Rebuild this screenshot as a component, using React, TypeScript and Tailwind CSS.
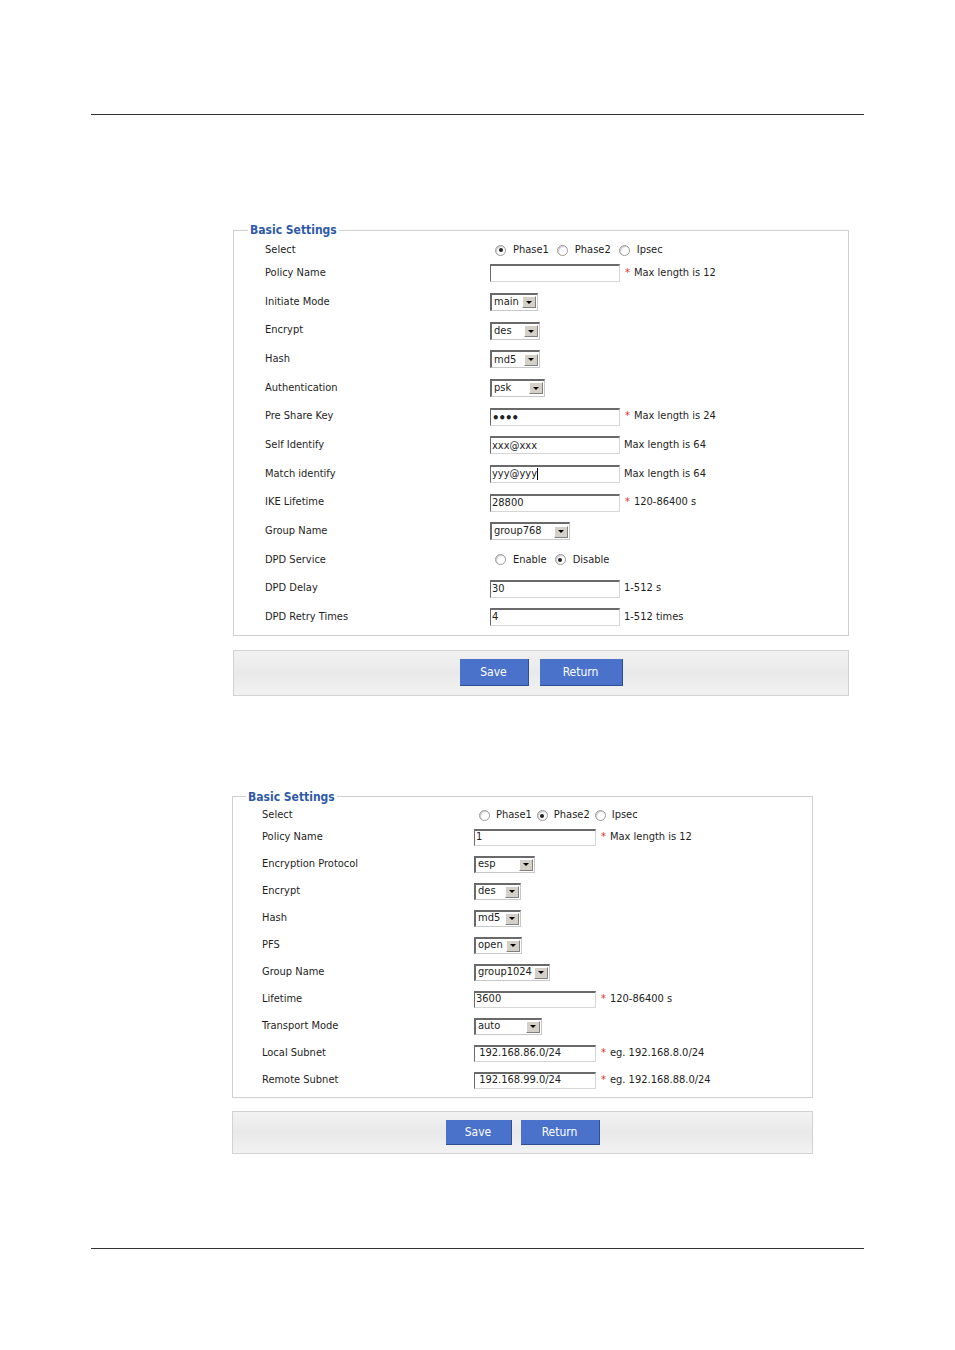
import React from "react";

type Row = {
  label: string;
  kind: "radio" | "text" | "select";
  options?: string[];
  checked?: number;
  value?: string;
  width?: number;
  star?: boolean;
  note?: string;
  dots?: boolean;
  caret?: boolean;
};

const phase1: Row[] = [
  { label: "Select", kind: "radio", options: ["Phase1", "Phase2", "Ipsec"], checked: 0 },
  { label: "Policy Name", kind: "text", value: "", star: true, note: "Max length is 12" },
  { label: "Initiate Mode", kind: "select", value: "main", width: 48 },
  { label: "Encrypt", kind: "select", value: "des", width: 50 },
  { label: "Hash", kind: "select", value: "md5", width: 50 },
  { label: "Authentication", kind: "select", value: "psk", width: 55 },
  { label: "Pre Share Key", kind: "text", value: "••••", dots: true, star: true, note: "Max length is 24" },
  { label: "Self Identify", kind: "text", value: "xxx@xxx", note: "Max length is 64" },
  { label: "Match identify", kind: "text", value: "yyy@yyy", caret: true, note: "Max length is 64" },
  { label: "IKE Lifetime", kind: "text", value: "28800", star: true, note: "120-86400 s" },
  { label: "Group Name", kind: "select", value: "group768", width: 80 },
  { label: "DPD Service", kind: "radio", options: ["Enable", "Disable"], checked: 1 },
  { label: "DPD Delay", kind: "text", value: "30", note: "1-512 s" },
  { label: "DPD Retry Times", kind: "text", value: "4", note: "1-512 times" },
];

const phase2: Row[] = [
  { label: "Select", kind: "radio", options: ["Phase1", "Phase2", "Ipsec"], checked: 1 },
  { label: "Policy Name", kind: "text", value: "1", star: true, note: "Max length is 12" },
  { label: "Encryption Protocol", kind: "select", value: "esp", width: 61 },
  { label: "Encrypt", kind: "select", value: "des", width: 47 },
  { label: "Hash", kind: "select", value: "md5", width: 47 },
  { label: "PFS", kind: "select", value: "open", width: 48 },
  { label: "Group Name", kind: "select", value: "group1024", width: 76 },
  { label: "Lifetime", kind: "text", value: "3600", star: true, note: "120-86400 s" },
  { label: "Transport Mode", kind: "select", value: "auto", width: 68 },
  { label: "Local Subnet", kind: "text", value: " 192.168.86.0/24", star: true, note: "eg. 192.168.8.0/24" },
  { label: "Remote Subnet", kind: "text", value: " 192.168.99.0/24", star: true, note: "eg. 192.168.88.0/24" },
];

const font = { fontFamily: '"DejaVu Sans Condensed", "DejaVu Sans", "Liberation Sans", sans-serif' };

const Radio = ({ on }: { on: boolean }) => (
  <span className="relative inline-block w-[11px] h-[11px] rounded-full border border-[#9a9a9a] bg-white shadow-[inset_1px_1px_1px_#c8c8c8]">
    {on && <span className="absolute left-[2.5px] top-[2.5px] w-[4px] h-[4px] rounded-full bg-[#222]" />}
  </span>
);

const TextBox = ({ row, w, h }: { row: Row; w: number; h: number }) => (
  <span
    className="flex items-center bg-white border border-t-2 border-t-[#6a6a6a] border-l-[#6a6a6a] border-r-[#d6d6d6] border-b-[#d6d6d6] pl-[1px] text-[11px] text-[#222] whitespace-pre"
    style={{ width: w, height: h }}
  >
    {row.dots ? <span className="text-[13px] font-bold tracking-[-1px] leading-none">{row.value}</span> : row.value}
    {row.caret && <span className="w-[1px] h-[12px] bg-black" />}
  </span>
);

const SelectBox = ({ row, h }: { row: Row; h: number }) => (
  <span
    className="flex items-center justify-between bg-white border border-t-2 border-l-2 border-t-[#6a6a6a] border-l-[#6a6a6a] border-r-[#c8c8c8] border-b-[#c8c8c8] pl-[2px] pr-[1px] text-[11px] text-[#222]"
    style={{ width: row.width, height: h }}
  >
    <span>{row.value}</span>
    <span className="flex items-center justify-center w-[14px] h-[12px] bg-[#d4d0c8] border border-t-white border-l-white border-r-[#808080] border-b-[#808080]">
      <span className="w-0 h-0 border-l-[3px] border-r-[3px] border-t-[3px] border-l-transparent border-r-transparent border-t-black" />
    </span>
  </span>
);

const Panel = ({
  rows,
  labelPad,
  labelCol,
  inputW,
  inputH,
  firstH,
  rowH,
  padTop,
  padBottom,
  radioGap,
  radioText,
  legendPad,
}: {
  rows: Row[];
  labelPad: number;
  labelCol: number;
  inputW: number;
  inputH: number;
  firstH: number;
  rowH: number;
  padTop: number;
  padBottom: number;
  radioGap: number;
  radioText: number;
  legendPad: number;
}) => (
  <fieldset className="border border-[#cfcfcf]" style={{ paddingTop: padTop, paddingBottom: padBottom }}>
    <legend className="px-[2px] text-[12px] font-bold text-[#2d5aa8] leading-[14px]" style={{ marginLeft: legendPad }}>
      Basic Settings
    </legend>
    {rows.map((row, i) => (
      <div key={i} className="flex items-center text-[11px] text-[#1e1e1e]" style={{ height: i === 0 ? firstH : rowH, paddingLeft: labelPad }}>
        <div className="shrink-0" style={{ width: labelCol }}>
          {row.label}
        </div>
        {row.kind === "radio" && (
          <div className="flex items-center pl-[5px]">
            {row.options!.map((o, j) => (
              <span key={o} className="flex items-center" style={{ marginRight: radioGap }}>
                <Radio on={j === row.checked} />
                <span style={{ marginLeft: radioText }}>{o}</span>
              </span>
            ))}
          </div>
        )}
        {row.kind === "text" && (
          <div className="flex items-center">
            <TextBox row={row} w={inputW} h={inputH} />
            {row.star ? <span className="ml-[5px] mr-[4px] text-[#e52b2b]">*</span> : <span className="ml-[4px]" />}
            {row.note}
          </div>
        )}
        {row.kind === "select" && <SelectBox row={row} h={inputH} />}
      </div>
    ))}
  </fieldset>
);

const ButtonBar = ({ h, bw, rw, bh, gap }: { h: number; bw: number; rw: number; bh: number; gap: number }) => (
  <div
    className="flex items-center justify-center border border-[#d2d2d2] bg-[linear-gradient(#f2f2f2,#e9e9e9_50%,#f2f2f2)]"
    style={{ height: h, gap }}
  >
    <span className="flex items-center justify-center bg-[#4a72cb] text-white text-[12px] border-b border-r border-[#2f4f95]" style={{ width: bw, height: bh }}>
      Save
    </span>
    <span className="flex items-center justify-center bg-[#4a72cb] text-white text-[12px] border-b border-r border-[#2f4f95]" style={{ width: rw, height: bh }}>
      Return
    </span>
  </div>
);

export default function App() {
  return (
    <div className="w-[955px] h-[1350px] bg-white" style={font}>
      <div className="pt-[114px] px-[91px]">
        <div className="h-[1px] bg-[#333]" />
      </div>

      <div className="mt-[108px] ml-[233px] w-[616px]">
        <Panel
          rows={phase1}
          labelPad={31}
          labelCol={225}
          inputW={130}
          inputH={18}
          firstH={18}
          rowH={28.67}
          padTop={4}
          padBottom={3}
          radioGap={8}
          radioText={7}
          legendPad={14}
        />
        <div className="mt-[14px]">
          <ButtonBar h={46} bw={69} rw={83} bh={27} gap={11} />
        </div>
      </div>

      <div className="mt-[94px] ml-[232px] w-[581px]">
        <Panel
          rows={phase2}
          labelPad={29}
          labelCol={212}
          inputW={122}
          inputH={17}
          firstH={16}
          rowH={27}
          padTop={4}
          padBottom={3}
          radioGap={5}
          radioText={6}
          legendPad={13}
        />
        <div className="mt-[13px]">
          <ButtonBar h={43} bw={66} rw={79} bh={25} gap={9} />
        </div>
      </div>

      <div className="mt-[94px] px-[91px]">
        <div className="h-[1px] bg-[#333]" />
      </div>
    </div>
  );
}
